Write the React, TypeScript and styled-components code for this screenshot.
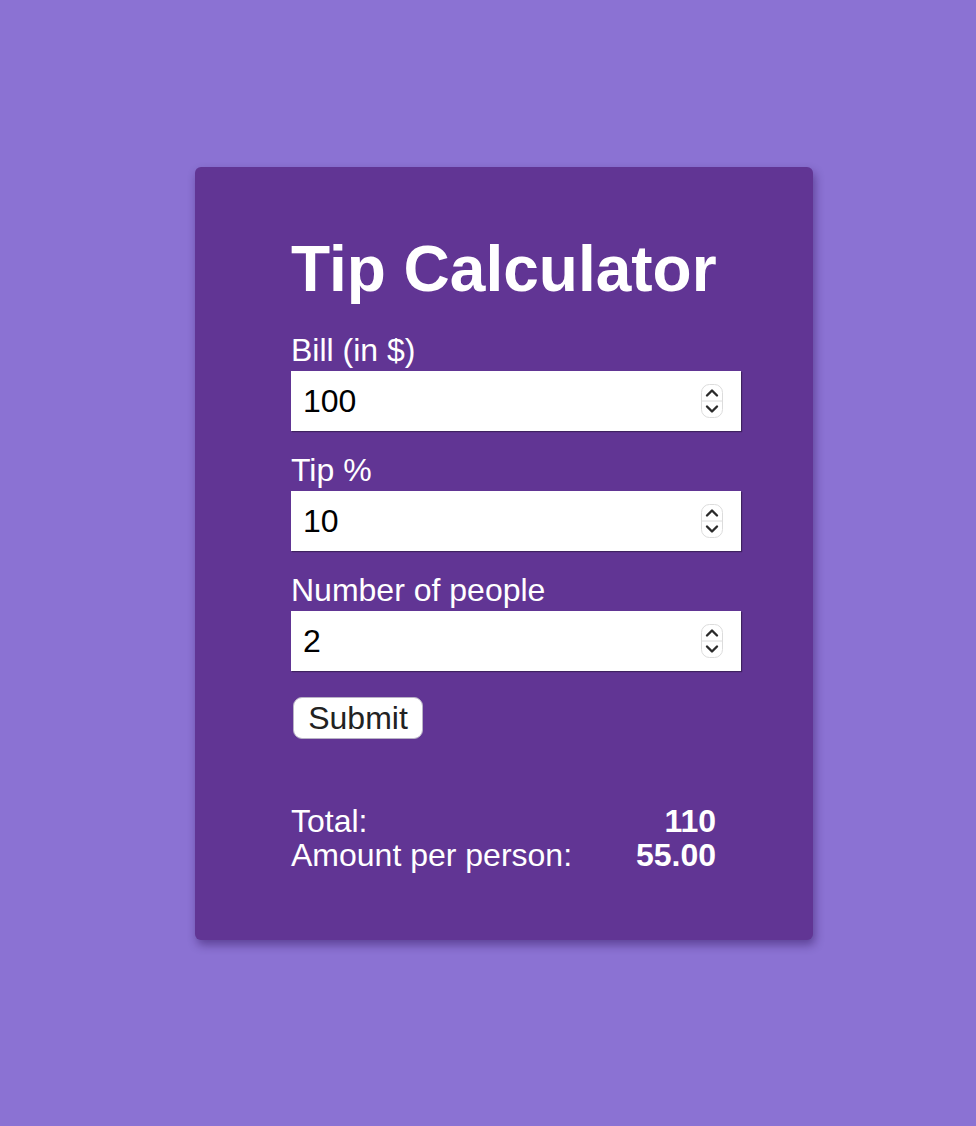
import styled, { createGlobalStyle } from "styled-components";

const GlobalStyle = createGlobalStyle`
  html, body {
    margin: 0;
    padding: 0;
    background-color: #8b72d3;
    font-family: "Liberation Sans", Arial, Helvetica, sans-serif;
  }
`;

const Page = styled.main`
  min-height: 1126px;
  box-sizing: border-box;
  padding: 167px 0 0 195px;
`;

const Card = styled.section`
  width: 618px;
  box-sizing: border-box;
  padding: 65px 96px 68px;
  background-color: #613594;
  border-radius: 6px;
  box-shadow: 2px 5px 10px rgba(40, 10, 80, 0.45);
  color: #ffffff;
`;

const Title = styled.h1`
  margin: 0 0 26px;
  font-size: 64px;
  line-height: 74px;
  font-weight: 700;
`;

const Field = styled.div`
  display: flex;
  flex-direction: column;
  margin-bottom: 21px;
`;

const Label = styled.label`
  font-size: 32px;
  line-height: 36px;
  margin-bottom: 3px;
`;

const InputBox = styled.div`
  width: 450px;
  height: 60px;
  display: flex;
  align-items: center;
  background: #ffffff;
  box-shadow: 1px 1px 1px rgba(0, 0, 0, 0.35);
  padding-right: 18px;
  box-sizing: border-box;
`;

const Input = styled.input`
  flex: 1;
  min-width: 0;
  height: 100%;
  border: none;
  outline: none;
  background: transparent;
  padding: 0 0 0 12px;
  font-family: inherit;
  font-size: 32px;
  color: #000000;
`;

const Spinner = styled.svg`
  flex: none;
  width: 22px;
  height: 34px;
`;

const SubmitButton = styled.button`
  margin: 5px 0 0 2px;
  width: 130px;
  height: 42px;
  padding: 0;
  background: #ffffff;
  border: 1px solid #b9b2c6;
  border-radius: 9px;
  font-family: inherit;
  font-size: 32px;
  color: #222222;
`;

const Results = styled.div`
  margin-top: 65px;
  width: 425px;
`;

const Row = styled.div`
  display: flex;
  justify-content: space-between;
  font-size: 32px;
  line-height: 34px;
`;

const Value = styled.span`
  font-weight: 700;
`;

const Stepper = () => (
  <Spinner viewBox="0 0 22 34">
    <rect x="0.5" y="0.5" width="21" height="33" rx="8" fill="#fff" stroke="#dcdcdc" />
    <line x1="1" y1="17" x2="21" y2="17" stroke="#dcdcdc" />
    <path d="M6 11.5 L11 6.5 L16 11.5" fill="none" stroke="#2a2a2a" strokeWidth="2.4" strokeLinecap="round" strokeLinejoin="round" />
    <path d="M6 22.5 L11 27.5 L16 22.5" fill="none" stroke="#2a2a2a" strokeWidth="2.4" strokeLinecap="round" strokeLinejoin="round" />
  </Spinner>
);

const fields = [
  { id: "bill", label: "Bill (in $)", value: "100" },
  { id: "tip", label: "Tip %", value: "10" },
  { id: "people", label: "Number of people", value: "2" },
];

export default function App() {
  return (
    <>
      <GlobalStyle />
      <Page>
        <Card>
          <Title>Tip Calculator</Title>
          <form onSubmit={(e) => e.preventDefault()}>
            {fields.map((f) => (
              <Field key={f.id}>
                <Label htmlFor={f.id}>{f.label}</Label>
                <InputBox>
                  <Input id={f.id} type="text" inputMode="numeric" defaultValue={f.value} />
                  <Stepper />
                </InputBox>
              </Field>
            ))}
            <SubmitButton type="submit">Submit</SubmitButton>
          </form>
          <Results>
            <Row>
              <span>Total:</span>
              <Value>110</Value>
            </Row>
            <Row>
              <span>Amount per person:</span>
              <Value>55.00</Value>
            </Row>
          </Results>
        </Card>
      </Page>
    </>
  );
}
